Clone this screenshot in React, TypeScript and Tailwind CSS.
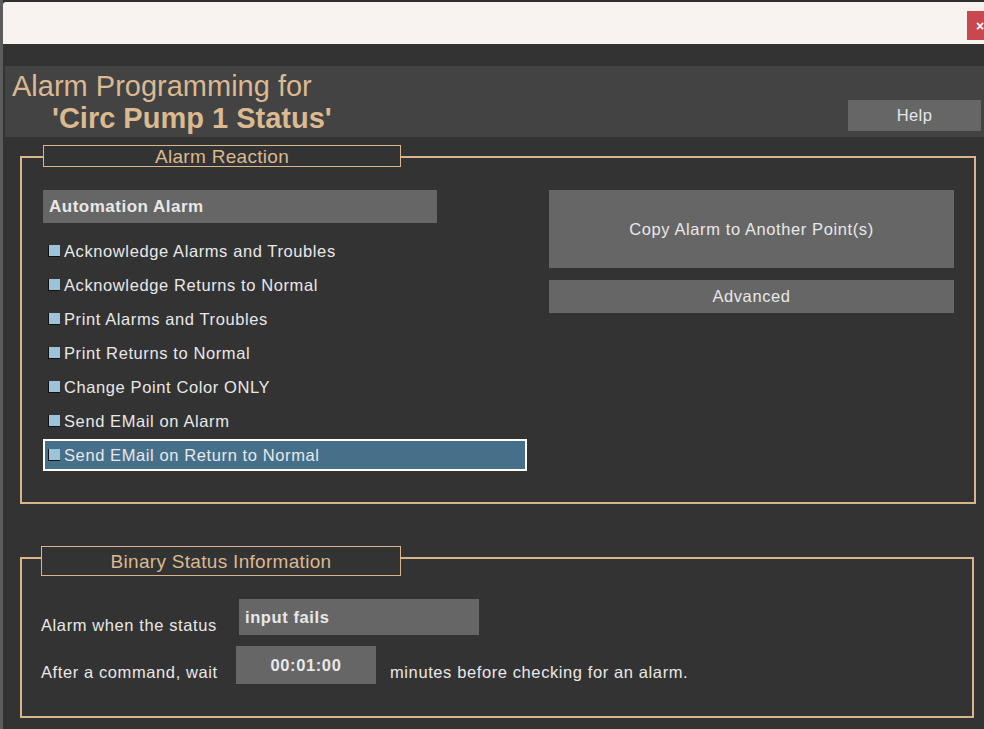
import React from "react";

const options = [
  "Acknowledge Alarms and Troubles",
  "Acknowledge Returns to Normal",
  "Print Alarms and Troubles",
  "Print Returns to Normal",
  "Change Point Color ONLY",
  "Send EMail on Alarm",
  "Send EMail on Return to Normal",
];

const font = "font-['Liberation_Sans',Arial,sans-serif]";

function OptionRow({ label, selected }: { label: string; selected: boolean }) {
  return (
    <div
      className={`h-[32px] flex items-center border-2 ${
        selected ? "bg-[#46708a] border-white" : "border-transparent"
      }`}
    >
      <span className="ml-[3px] w-[12px] h-[12px] bg-[#9dc3da] border-l border-b border-[#111]" />
      <span className="ml-[4px] text-[16.5px] tracking-[0.6px] text-[#e8e8e8] leading-[20px]">
        {label}
      </span>
    </div>
  );
}

export default function App() {
  return (
    <div className={`w-[984px] h-[729px] bg-[#333333] flex overflow-hidden ${font}`}>
      <div className="w-[3px] h-full bg-[#5c5c5c]" />
      <div className="flex-1 flex flex-col">
        {/* title bar */}
        <div className="h-[2px] bg-[#303030]" />
        <div className="h-[42px] bg-[#f8f2f1] rounded-tl-[3px] flex justify-end items-start">
          <div className="mt-[9px] w-[17px] h-[29px] bg-[#c9484e] overflow-hidden flex items-center pl-[9px] text-white text-[14px] font-bold leading-none">
            ×
          </div>
        </div>
        <div className="h-[22px]" />

        {/* header */}
        <div className="ml-[2px] h-[71px] bg-[#434343] flex justify-between">
          <div className="pt-[5px] pl-[7px] text-[#dbb991] text-[29px] leading-[30px]">
            <div>Alarm Programming for</div>
            <div className="mt-[2px] pl-[40px] font-bold">'Circ Pump 1 Status'</div>
          </div>
          <div className="self-end mb-[6px] mr-[3px] w-[133px] h-[31px] bg-[#666666] flex items-center justify-center text-[#e4e8ec] text-[16.5px] tracking-[0.4px]">
            Help
          </div>
        </div>

        {/* Alarm Reaction */}
        <div className="ml-[17px] mr-[8px] mt-[19px] h-[348px] border-2 border-[#d7b68c]">
          <div className="ml-[21px] -mt-[13px] w-[358px] h-[22px] border border-[#d7b68c] bg-[#333333] flex items-center justify-center text-[#dbb991] text-[19px] tracking-[0.3px] leading-none">
            Alarm Reaction
          </div>
          <div className="flex pl-[21px] pr-[20px] gap-[22px] mt-[23px]">
            <div className="w-[484px] flex flex-col">
              <div className="w-[394px] h-[33px] bg-[#666666] flex items-center pl-[6px] text-[17px] font-bold tracking-[0.5px] text-[#e8e8e8]">
                Automation Alarm
              </div>
              <div className="mt-[12px] flex flex-col gap-[2px]">
                {options.map((o, i) => (
                  <OptionRow key={o} label={o} selected={i === options.length - 1} />
                ))}
              </div>
            </div>
            <div className="flex-1 flex flex-col gap-[12px]">
              <div className="h-[78px] bg-[#666666] flex items-center justify-center text-[16.5px] tracking-[0.6px] text-[#e8e8e8]">
                Copy Alarm to Another Point(s)
              </div>
              <div className="h-[33px] bg-[#666666] flex items-center justify-center text-[16.5px] tracking-[0.6px] text-[#e8e8e8]">
                Advanced
              </div>
            </div>
          </div>
        </div>

        {/* Binary Status Information */}
        <div className="ml-[17px] mr-[10px] mt-[53px] h-[161px] border-2 border-[#d7b68c]">
          <div className="ml-[19px] -mt-[13px] w-[360px] h-[30px] border border-[#d7b68c] bg-[#333333] flex items-center justify-center text-[#dbb991] text-[19px] tracking-[0.3px] leading-none">
            Binary Status Information
          </div>
          <div className="pl-[19px] mt-[23px] flex flex-col gap-[11px] text-[16.5px] tracking-[0.6px] text-[#e8e8e8] leading-[20px]">
            <div className="flex items-end">
              <span className="w-[198px]">Alarm when the status</span>
              <div className="w-[240px] h-[36px] bg-[#666666] flex items-center pl-[6px] font-bold">
                input fails
              </div>
            </div>
            <div className="flex items-end">
              <span className="w-[195px] mb-[2px]">After a command, wait</span>
              <div className="w-[140px] h-[38px] bg-[#666666] flex items-center justify-center font-bold">
                00:01:00
              </div>
              <span className="ml-[14px] mb-[2px]">minutes before checking for an alarm.</span>
            </div>
          </div>
        </div>
      </div>
    </div>
  );
}
